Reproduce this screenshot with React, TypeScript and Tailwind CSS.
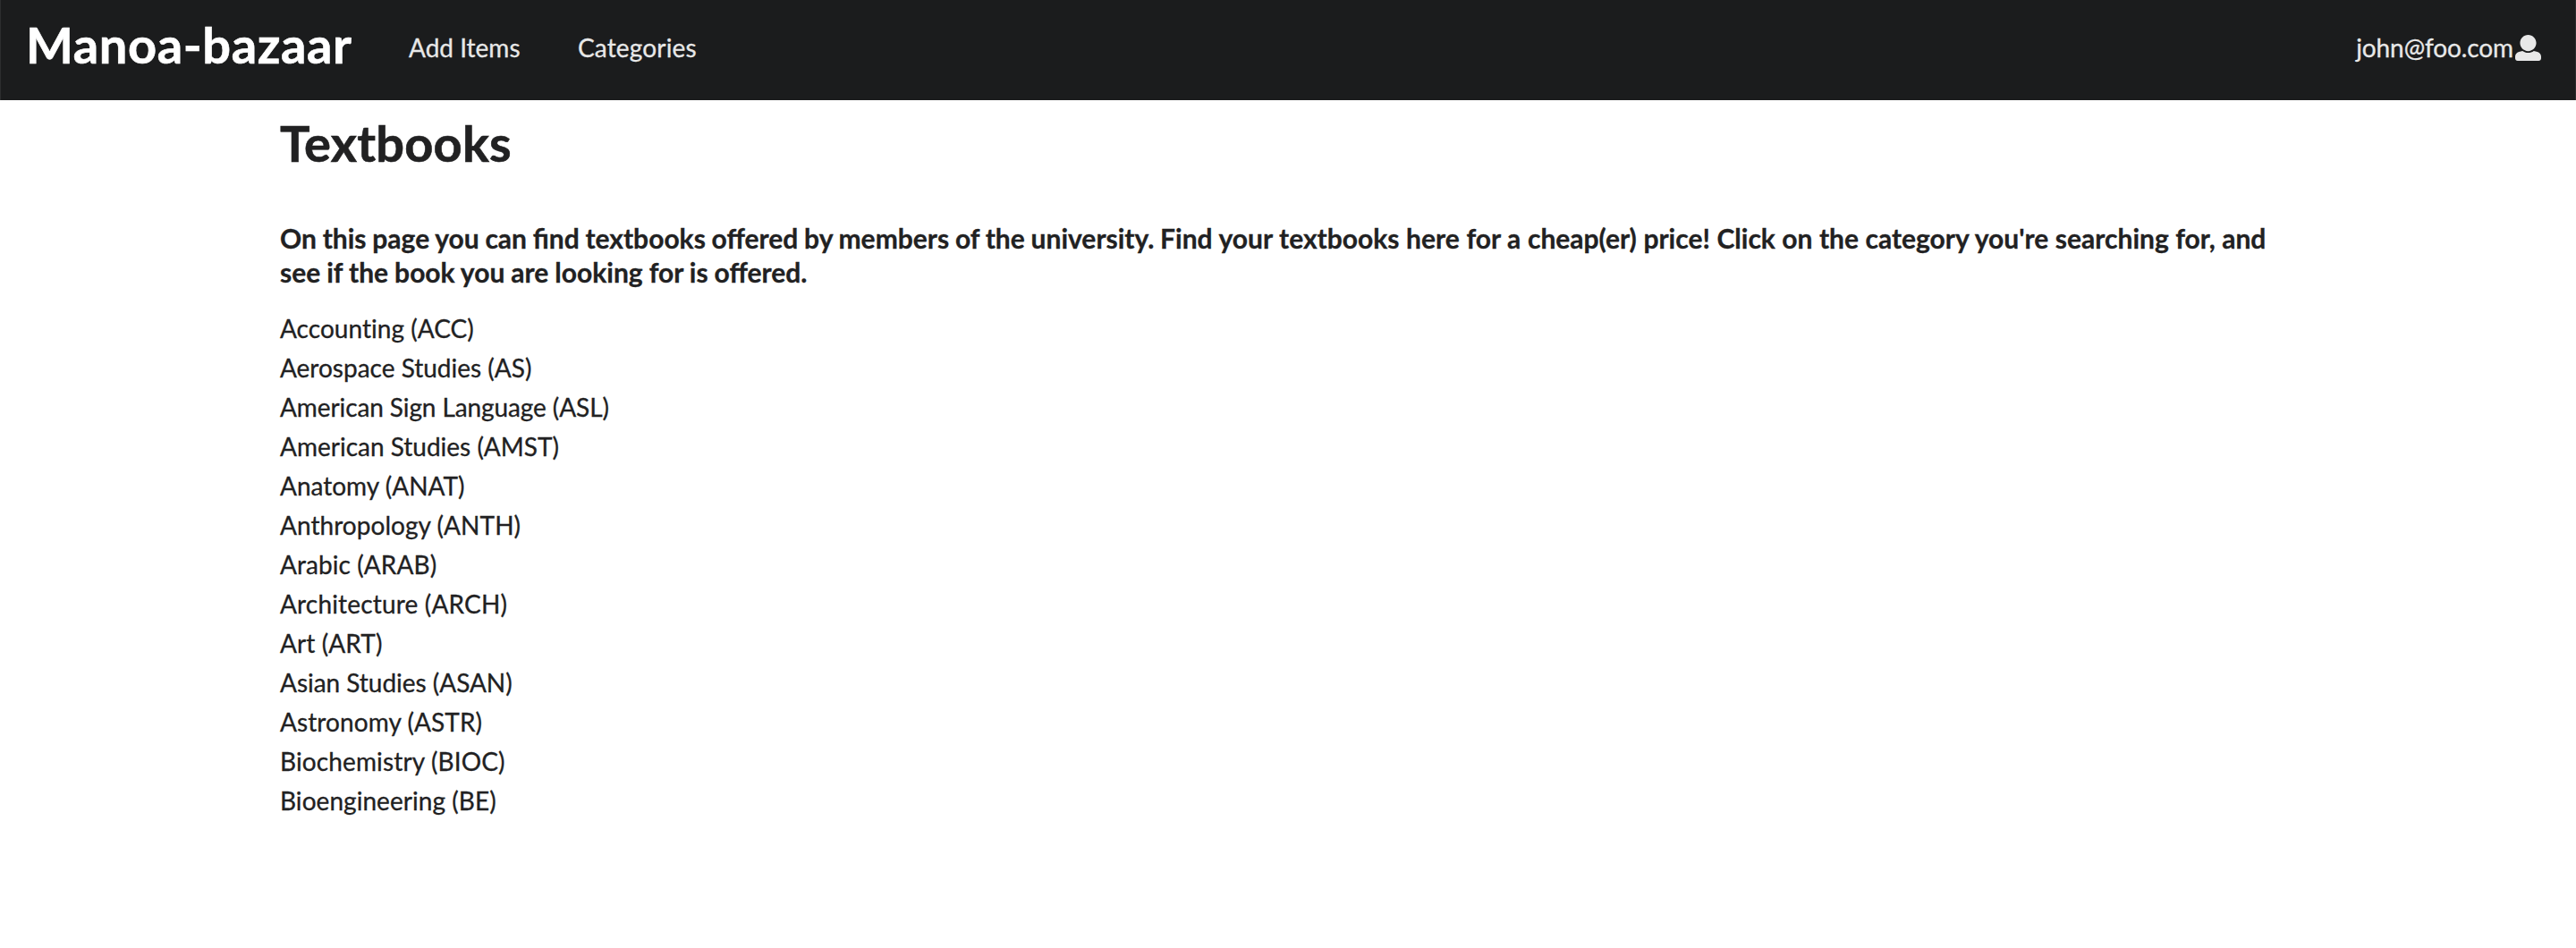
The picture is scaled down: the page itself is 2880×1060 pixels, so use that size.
const subjects = [
  { name: 'Accounting (ACC)', spacing: 'tracking-[0.03px]' },
  { name: 'Aerospace Studies (AS)', spacing: 'tracking-normal' },
  { name: 'American Sign Language (ASL)', spacing: 'tracking-[-0.1px]' },
  { name: 'American Studies (AMST)', spacing: 'tracking-normal' },
  { name: 'Anatomy (ANAT)', spacing: 'tracking-normal' },
  { name: 'Anthropology (ANTH)', spacing: 'tracking-[0.05px]' },
  { name: 'Arabic (ARAB)', spacing: 'tracking-[0.08px]' },
  { name: 'Architecture (ARCH)', spacing: 'tracking-[0.17px]' },
  { name: 'Art (ART)', spacing: 'tracking-[0.1px]' },
  { name: 'Asian Studies (ASAN)', spacing: 'tracking-[-0.03px]' },
  { name: 'Astronomy (ASTR)', spacing: 'tracking-[0.08px]' },
  { name: 'Biochemistry (BIOC)', spacing: 'tracking-[0.13px]' },
  { name: 'Bioengineering (BE)', spacing: 'tracking-[0.05px]' },
];

function UserIcon() {
  return (
    <svg viewBox="0 0 512 512" className="mb-[5px] ml-[2px] size-[29px]" fill="currentColor">
      <path d="M256 0c88.366 0 160 71.634 160 160s-71.634 160-160 160S96 248.366 96 160 167.634 0 256 0zm183.283 333.821l-71.313-17.828c-74.923 53.89-165.738 41.864-223.94 0l-71.313 17.828C29.981 344.505 0 382.903 0 426.955V464c0 26.51 21.49 48 48 48h416c26.51 0 48-21.49 48-48v-37.045c0-44.052-29.981-82.45-72.717-93.134z" />
    </svg>
  );
}

export default function App() {
  return (
    <div className="min-h-[1060px] bg-white font-['Lato',sans-serif] text-[28px] leading-[40px] text-[#212122] [-webkit-text-stroke:0.3px]">
      <nav className="flex h-[112px] items-center border-x border-[#2d2e2f] bg-[#1b1c1d] text-[#e8e8e8]">
        <h1 className="mb-[12px] ml-[28px] w-[428px] text-[56px] leading-[72px] font-bold tracking-[0.6px] text-white [-webkit-text-stroke:0.6px]">Manoa-bazaar</h1>
        <a className="mb-[6px] w-[189px]">Add Items</a>
        <a className="mb-[6px] tracking-[0.15px]">Categories</a>
        <div className="mr-[38px] ml-auto flex items-center">
          <span className="mb-[6px] tracking-[-0.1px]">john@foo.com</span>
          <UserIcon />
        </div>
      </nav>
      <main className="ml-[313px] w-[2254px]">
        <h1 className="pt-[12px] text-[56px] leading-[72px] font-bold tracking-[0.2px] [-webkit-text-stroke:0.6px]">Textbooks</h1>
        <h3 className="mt-[51px] text-[30px] leading-[38px] font-bold">
          <span className="[word-spacing:-0.54px]">On this page you can find textbooks offered by members of the university. </span>
          <span className="[word-spacing:0.3px]">Find your textbooks here for a cheap(er) price! </span>
          <span className="[word-spacing:0.15px]">Click on the category you're searching for, and </span>
          <span className="[word-spacing:-0.3px]">see if the book you are looking for is offered.</span>
        </h3>
        <ul className="mt-[22px] [font-variant-ligatures:no-common-ligatures]">
          {subjects.map(({ name, spacing }) => (
            <li key={name} className={`h-[44px] leading-[44px] ${spacing}`}>{name}</li>
          ))}
        </ul>
      </main>
    </div>
  );
}
